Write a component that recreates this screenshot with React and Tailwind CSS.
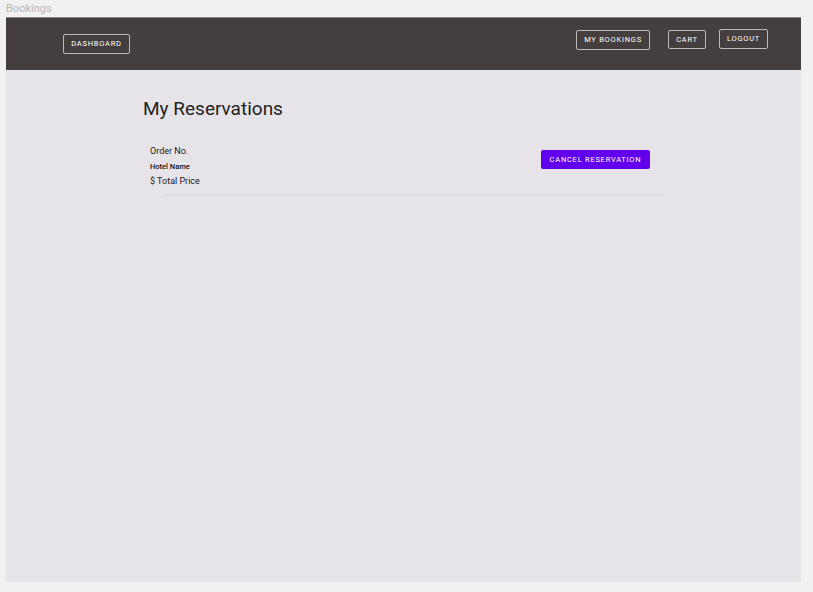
function NavButton({ children, className = "" }) {
  return (
    <button
      className={`rounded-[2px] border border-[#bdb9b8] px-[6px] text-[7.5px] font-normal tracking-[0.1em] text-white ${className}`}
    >
      {children}
    </button>
  );
}

function App() {
  const reservations = [{ id: 1, order: "Order No.", hotel: "Hotel Name", price: "$ Total Price" }];

  return (
    <div className="h-[592px] w-[813px] bg-[#f1f1f1] font-['Roboto',sans-serif]">
      <p className="h-[17px] pl-[6px] pt-[2px] text-[11px] leading-[13px] text-[#b7b7b7]">Bookings</p>
      <div className="ml-[6px] flex h-[565px] w-[795px] flex-col bg-[#e6e4e9]">
        <header className="flex h-[53px] items-start justify-between border-t border-[#8a8584] bg-[#443f3e]">
          <NavButton className="ml-[57px] mt-[16px] h-[20px] w-[67px]">DASHBOARD</NavButton>
          <div className="mr-[33px] flex items-start">
            <NavButton className="mt-[12px] h-[20px] w-[74px]">MY BOOKINGS</NavButton>
            <NavButton className="ml-[18px] mt-[12px] h-[19px] w-[38px]">CART</NavButton>
            <NavButton className="ml-[13px] mt-[11px] h-[20px] w-[49px]">LOGOUT</NavButton>
          </div>
        </header>
        <main className="pl-[137px]">
          <h1 className="mt-[27px] text-[19px] leading-[24px] text-[#222]">My Reservations</h1>
          <div className="mt-[23px] w-[522px]">
            {reservations.map((r) => (
              <div key={r.id} className="flex items-start justify-between pl-[7px] pr-[15px]">
                <div className="flex flex-col">
                  <span className="text-[9px] leading-[14px] text-[#222]">{r.order}</span>
                  <span className="mt-[4px] text-[7.5px] font-medium leading-[10px] text-[#111]">{r.hotel}</span>
                  <span className="mt-[2px] text-[9px] leading-[14px] text-[#222]">{r.price}</span>
                </div>
                <button className="mt-[6px] h-[19px] w-[109px] rounded-[2px] bg-[#6200ee] text-[7.5px] font-normal tracking-[0.1em] text-white">
                  CANCEL RESERVATION
                </button>
              </div>
            ))}
            <div className="ml-[21px] mt-[6px] h-px w-[501px] bg-[#d9d7dc]" />
          </div>
        </main>
      </div>
    </div>
  );
}

export default App;
